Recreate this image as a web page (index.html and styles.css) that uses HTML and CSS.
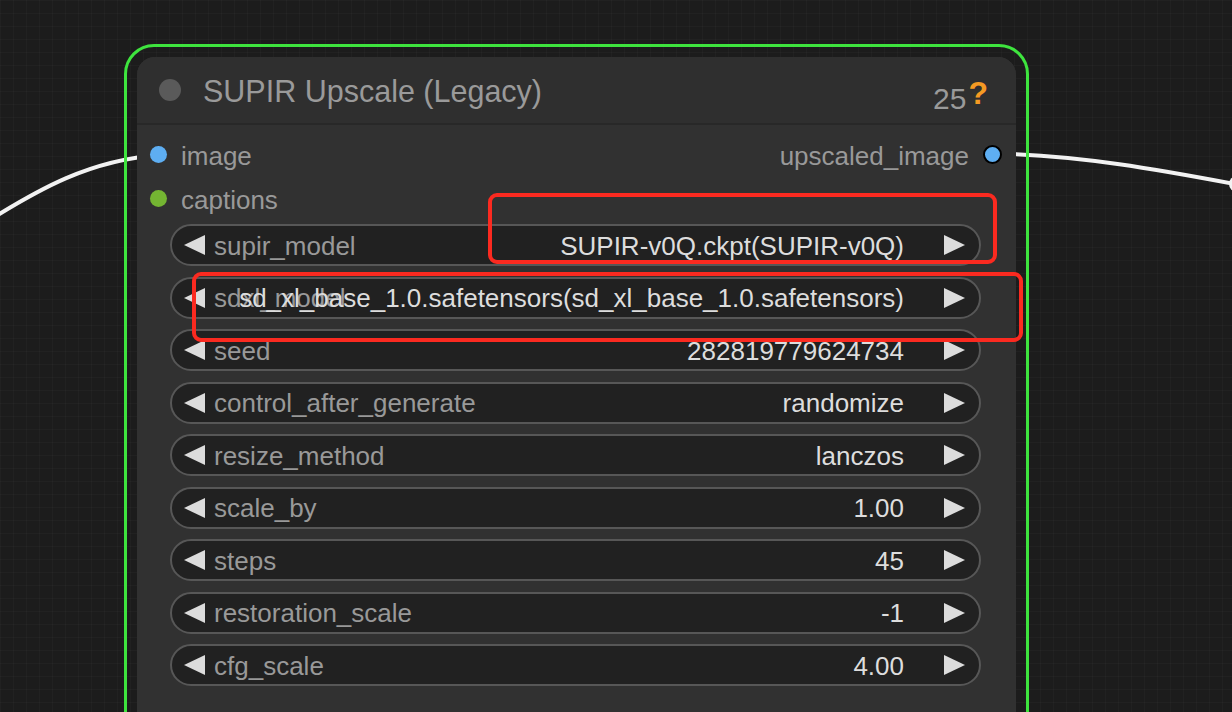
FILE: index.html
```html
<!DOCTYPE html>
<html>
<head>
<meta charset="utf-8">
<link rel="stylesheet" href="styles.css">
</head>
<body>
<div class="canvas">
  <svg class="links" width="1232" height="712" viewBox="0 0 1232 712">
    <path d="M -20 226 C 40 188, 90 160, 160 155" />
    <path d="M 1010 154 C 1085 157, 1150 168, 1240 185" />
    <circle cx="1237" cy="184" r="8" />
  </svg>
  <div class="selection">
    <div class="node">
      <div class="title">
        <span class="tdot"></span>
        <span class="name">SUPIR Upscale (Legacy)</span>
        <span class="badge">25<span class="q">?</span></span>
      </div>
      <div class="slots">
        <div class="slotrow">
          <div class="in"><span class="sdot blue"></span>image</div>
          <div class="out">upscaled_image<span class="sdot blue ring"></span></div>
        </div>
        <div class="slotrow">
          <div class="in"><span class="sdot green"></span>captions</div>
        </div>
      </div>
      <div class="widgets">
        <div class="widget">
          <svg class="arr" viewBox="0 0 21 20"><polygon points="21,0 21,20 0,10"/></svg>
          <span class="label">supir_model</span><span class="value">SUPIR-v0Q.ckpt(SUPIR-v0Q)</span>
          <svg class="arr" viewBox="0 0 21 20"><polygon points="0,0 0,20 21,10"/></svg>
        </div>
        <div class="widget">
          <svg class="arr" viewBox="0 0 21 20"><polygon points="21,0 21,20 0,10"/></svg>
          <span class="label">sdxl_model</span><span class="value">sd_xl_base_1.0.safetensors(sd_xl_base_1.0.safetensors)</span>
          <svg class="arr" viewBox="0 0 21 20"><polygon points="0,0 0,20 21,10"/></svg>
        </div>
        <div class="widget">
          <svg class="arr" viewBox="0 0 21 20"><polygon points="21,0 21,20 0,10"/></svg>
          <span class="label">seed</span><span class="value">282819779624734</span>
          <svg class="arr" viewBox="0 0 21 20"><polygon points="0,0 0,20 21,10"/></svg>
        </div>
        <div class="widget">
          <svg class="arr" viewBox="0 0 21 20"><polygon points="21,0 21,20 0,10"/></svg>
          <span class="label">control_after_generate</span><span class="value">randomize</span>
          <svg class="arr" viewBox="0 0 21 20"><polygon points="0,0 0,20 21,10"/></svg>
        </div>
        <div class="widget">
          <svg class="arr" viewBox="0 0 21 20"><polygon points="21,0 21,20 0,10"/></svg>
          <span class="label">resize_method</span><span class="value">lanczos</span>
          <svg class="arr" viewBox="0 0 21 20"><polygon points="0,0 0,20 21,10"/></svg>
        </div>
        <div class="widget">
          <svg class="arr" viewBox="0 0 21 20"><polygon points="21,0 21,20 0,10"/></svg>
          <span class="label">scale_by</span><span class="value">1.00</span>
          <svg class="arr" viewBox="0 0 21 20"><polygon points="0,0 0,20 21,10"/></svg>
        </div>
        <div class="widget">
          <svg class="arr" viewBox="0 0 21 20"><polygon points="21,0 21,20 0,10"/></svg>
          <span class="label">steps</span><span class="value">45</span>
          <svg class="arr" viewBox="0 0 21 20"><polygon points="0,0 0,20 21,10"/></svg>
        </div>
        <div class="widget">
          <svg class="arr" viewBox="0 0 21 20"><polygon points="21,0 21,20 0,10"/></svg>
          <span class="label">restoration_scale</span><span class="value">-1</span>
          <svg class="arr" viewBox="0 0 21 20"><polygon points="0,0 0,20 21,10"/></svg>
        </div>
        <div class="widget">
          <svg class="arr" viewBox="0 0 21 20"><polygon points="21,0 21,20 0,10"/></svg>
          <span class="label">cfg_scale</span><span class="value">4.00</span>
          <svg class="arr" viewBox="0 0 21 20"><polygon points="0,0 0,20 21,10"/></svg>
        </div>
      </div>
    </div>
  </div>
  <div class="mark mark1"></div>
  <div class="mark mark2"></div>
</div>
</body>
</html>
```

FILE: styles.css
```css
html, body {
  margin: 0;
  padding: 0;
  background: #1c1c1c;
}
.canvas {
  position: relative;
  width: 1232px;
  height: 712px;
  overflow: hidden;
  background-color: #1c1c1c;
  background-image:
    linear-gradient(to right, rgba(255,255,255,0.025) 1px, transparent 1px),
    linear-gradient(to bottom, rgba(255,255,255,0.025) 1px, transparent 1px);
  background-size: 13px 13px;
  font-family: "Liberation Sans", Arial, sans-serif;
}
.links {
  position: absolute;
  left: 0;
  top: 0;
}
.links path {
  fill: none;
  stroke: #f2f2f2;
  stroke-width: 4;
  stroke-linecap: round;
}
.links circle {
  fill: #f2f2f2;
}
.selection {
  position: absolute;
  left: 124px;
  top: 44px;
  width: 879px;
  height: 740px;
  border: 3px solid #3ee43e;
  border-radius: 30px;
  padding: 10px;
}
.node {
  background: #313131;
  border-radius: 18px;
  height: 100%;
  display: flex;
  flex-direction: column;
  overflow: hidden;
}
.title {
  height: 66px;
  background: #2f2f2f;
  border-bottom: 2px solid #282828;
  display: flex;
  align-items: center;
  padding: 0 28px 0 22px;
  color: #9a9a9a;
  flex-shrink: 0;
}
.tdot {
  width: 22px;
  height: 22px;
  border-radius: 50%;
  background: #5a5a5a;
  margin-right: 22px;
  flex-shrink: 0;
}
.name {
  font-size: 30.5px;
  flex: 1;
  padding-top: 2px;
}
.badge {
  font-size: 30px;
  padding-top: 10px;
}
.q {
  color: #f59a23;
  font-weight: bold;
  font-size: 32px;
  margin-left: 2px;
  vertical-align: 5px;
}
.slots {
  padding-top: 9px;
}
.slotrow {
  height: 44px;
  display: flex;
  align-items: center;
  justify-content: space-between;
  font-size: 26px;
  color: #999;
}
.in {
  display: flex;
  align-items: center;
  padding-left: 13px;
}
.out {
  display: flex;
  align-items: center;
  padding-right: 14px;
}
.sdot {
  width: 17px;
  height: 17px;
  border-radius: 50%;
  display: inline-block;
  box-sizing: border-box;
  margin-top: -3px;
}
.in .sdot {
  margin-right: 14px;
}
.out .sdot {
  margin-left: 14px;
}
.blue {
  background: #5eaef2;
}
.green {
  background: #74b532;
}
.ring {
  width: 19px;
  height: 19px;
  border: 2px solid #000;
}
.widgets {
  display: flex;
  flex-direction: column;
  gap: 10.5px;
  padding: 2px 35px 0 33px;
}
.widget {
  height: 42px;
  box-sizing: border-box;
  border: 2px solid #575757;
  border-radius: 21px;
  background: #212121;
  display: grid;
  grid-template-columns: 21px 1fr 21px;
  align-items: center;
  padding: 0 14px 0 12px;
  font-size: 26px;
}
.arr {
  width: 21px;
  height: 20px;
  fill: #dcdcdc;
  grid-row: 1;
}
.widget .arr:first-child {
  grid-column: 1;
}
.widget .arr:last-child {
  grid-column: 3;
}
.label {
  grid-column: 2;
  grid-row: 1;
  justify-self: start;
  color: #999;
  padding-left: 9px;
  padding-top: 2px;
  white-space: nowrap;
}
.value {
  grid-column: 2;
  grid-row: 1;
  justify-self: end;
  color: #dddddd;
  padding-right: 40px;
  padding-top: 2px;
  white-space: nowrap;
}
.mark {
  position: absolute;
  border: 4px solid #fb2a20;
  border-radius: 9px;
}
.mark1 {
  left: 488px;
  top: 193px;
  width: 501px;
  height: 63px;
}
.mark2 {
  left: 192px;
  top: 272px;
  width: 823px;
  height: 62px;
}
```
